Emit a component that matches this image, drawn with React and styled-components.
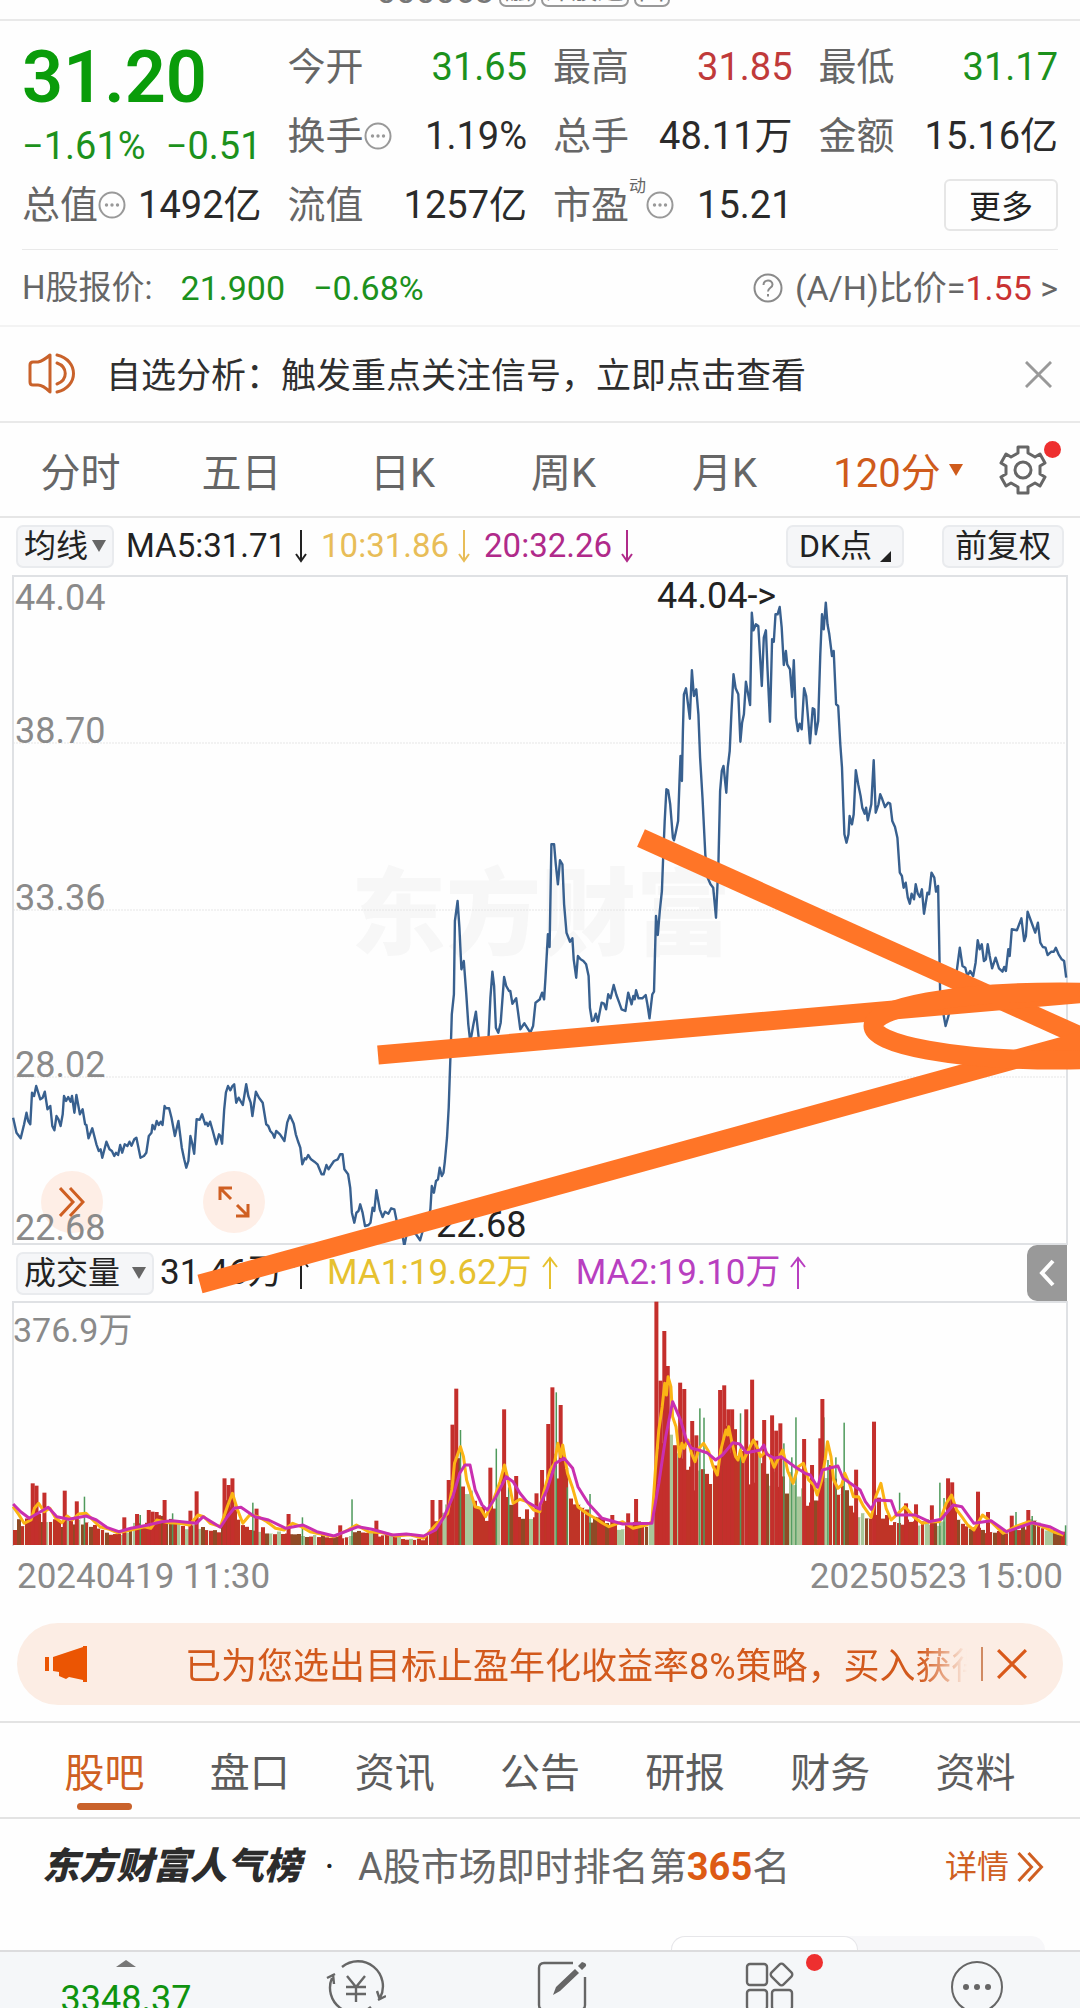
import styled, { createGlobalStyle } from "styled-components";

const GlobalStyle = createGlobalStyle`
  * {
    box-sizing: border-box;
  }
  body {
    margin: 0;
    background: #fefefe;
    font-family: Roboto, "Noto Sans CJK SC", sans-serif;
    color: #222;
  }
  button {
    margin: 0;
    padding: 0;
    border: 0;
    background: none;
    font: inherit;
    color: inherit;
    cursor: pointer;
  }
  a {
    color: inherit;
    text-decoration: none;
  }
  svg {
    display: block;
  }
`;

// the price and volume series are digitised in two halves at this resolution
const SCALE_X = 2.904;
const SCALE_Y = 3;
const HALF = 540;

const place = (points, left, top) =>
  points.map(([x, y]) => [left + x / SCALE_X, top + y / SCALE_Y]);

const toPoints = (points) =>
  points.map(([x, y]) => `${x.toFixed(1)},${y.toFixed(1)}`).join(" ");

const pairs = (text) => text.trim().split(/\s+/).map((p) => p.split(",").map(Number));

const priceFirst = pairs(`
38,800 48,845 60,862 70,820 77,785 82,810 88,820 93,725 99,735 105,705 117,745 124,740 130,722 138,775 146,765
152,825 158,838 164,795 170,805 176,825 182,790 186,735 192,750 198,738 205,752 209,735 216,785 222,732 232,790
240,775 247,820 251,822 257,862 268,832 280,880 287,900 292,895 297,920 309,872 318,895 325,900 332,915 337,905
343,912 349,882 355,905 362,880 370,885 376,872 382,884 390,865 396,860 408,920 418,915 425,905 432,855 440,845
443,822 449,835 455,810 461,822 467,812 472,822 478,765 482,772 491,772 498,800 508,855 518,810 528,890 535,925
541,950 547,930 553,855 558,875 564,908 571,805 580,806 587,790 596,820 600,815 604,825 610,812 618,840 628,880
636,850 640,855 645,878 651,775 656,725 662,705 669,718 675,705 680,700 686,755 693,740 705,762 715,700 721,735
728,755 733,795 743,722 752,740 763,755 773,820 779,825 785,840 792,848 797,860 802,840 813,850 826,870 834,815
842,793 853,818 859,850 865,870 872,890 878,940 885,922 889,925 895,912 903,925 913,932 922,940 934,970 940,970
948,942 954,955 960,945 970,930 981,925 988,910 995,910 1000,955 1011,970 1017,1010 1022,1085 1029,1115
1035,1085 1041,1080 1046,1060 1053,1085 1060,1125 1070,1122 1076,1115 1082,1070 1087,1080 1093,1018 1103,1075
1111,1098 1118,1082 1128,1088 1136,1072 1145,1075 1152,1110 1160,1115 1170,1160 1174,1185 1180,1155 1190,1135
1200,1145 1208,1150 1220,1168 1230,1130 1240,1120 1250,1075 1254,1005 1260,1025 1266,990 1272,985 1277,950
1283,975 1288,965 1292,930 1298,860 1303,770 1306,680 1310,560 1312,490 1318,430 1321,210 1329,150 1334,230
1340,355 1347,330 1354,430 1360,520 1365,565 1369,555 1374,525 1382,482 1390,560 1400,585 1412,590 1419,555
1424,440 1430,362 1435,405 1440,530 1447,545 1454,515 1460,430 1464,378 1470,405 1478,420 1482,420 1488,458
1499,442 1504,480 1511,535 1523,517 1540,545 1548,525 1555,455 1568,445`);

const priceSecond = pairs(`
0,1282 6,1265 12,1285 16,1220 23,1090 28,1128 33,820 41,820 46,880 52,940 58,868 65,880 70,1000 77,1085 87,1112
94,1102 98,1165 105,1220 110,1155 118,1165 126,1170 134,1180 141,1215 145,1310 151,1350 156,1348 162,1328
168,1352 175,1315 179,1295 186,1298 192,1315 198,1270 205,1282 214,1242 222,1272 230,1295 237,1315 248,1320
256,1265 266,1300 271,1275 275,1285 279,1258 286,1282 297,1282 307,1272 312,1300 318,1342 326,1270 331,1262
337,1035 342,1092 348,1020 354,960 357,880 362,750 367,655 372,658 378,700 386,800 389,808 394,785 401,750
405,630 408,555 412,630 415,480 418,370 424,352 435,443 441,298 447,375 454,355 460,430 465,560 472,680 480,850
487,920 495,940 503,950 511,1040 518,880 523,660 528,600 533,585 541,665 545,590 551,540 556,420 562,310 568,352
576,370 582,512 587,455 592,430 598,332 610,402 615,125 620,178 627,160 634,165 644,345 650,200 656,178 661,300
668,452 674,205 679,212 684,130 690,130 696,108 702,170 708,282 714,240 718,280 726,295 732,378 737,268 743,440
749,480 754,458 760,475 767,352 773,375 779,450 784,517 792,412 797,415 801,490 808,450 814,250 819,130 824,175
830,95 835,160 840,190 848,255 853,240 860,400 866,405 872,520 877,590 881,710 884,790 890,815 896,790 899,735
906,760 911,730 917,598 924,640 931,675 936,710 943,728 947,710 952,748 962,700 969,568 975,725 983,700 988,670
994,685 1002,708 1011,695 1017,698 1023,750 1031,768 1038,800 1045,905 1051,915 1056,950 1062,935 1068,980
1074,998 1079,968 1086,985 1091,940 1097,968 1103,978 1109,955 1115,1028 1125,965 1130,970 1137,905 1145,920
1150,962 1156,945 1159,1100 1162,1260 1170,1320 1178,1365 1190,1320 1205,1240 1212,1185 1219,1130 1227,1185
1235,1190 1241,1215 1249,1200 1258,1215 1265,1175 1271,1108 1277,1135 1283,1120 1289,1170 1295,1165 1300,1120
1306,1155 1313,1192 1323,1160 1333,1192 1343,1202 1348,1188 1353,1200 1360,1135 1364,1155 1370,1075 1385,1078
1398,1042 1406,1110 1411,1095 1416,1022 1426,1050 1438,1085 1446,1055 1453,1115 1460,1128 1468,1130 1474,1152
1485,1142 1492,1142 1498,1130 1506,1150 1515,1165 1522,1170 1528,1220`);

const priceLine = [...place(priceFirst, 0, 277), ...place(priceSecond, HALF, -3)];

const volumeBase = [
  ...place(pairs(`
38,885 100,850 150,880 250,880 300,905 340,910 430,870 480,870 540,890 600,890 640,900 655,800 680,860 720,890
800,905 900,915 1000,920 1030,900 1100,915 1220,930 1260,880 1300,820 1320,680 1345,730 1370,800 1410,870
1440,800 1470,760 1500,850 1568,860`), 0, -71),
  ...place(pairs(`
0,820 35,700 60,700 100,830 150,865 200,885 300,885 325,870 335,700 350,560 370,500 380,600 400,700 430,720
490,760 520,650 550,640 600,700 700,740 790,820 830,720 880,800 950,880 975,820 1010,880 1100,870 1160,890
1190,820 1230,890 1350,910 1420,880 1528,910`), HALF, -71),
];

const redSpikes = [
  ...place(pairs(`
95,760 106,767 129,788 188,782 223,814 361,862 398,852 432,840 443,845 455,846 478,810 553,842 571,784 652,745
664,765 675,745 745,836 838,852 988,886 1093,872 1256,810 1279,810 1303,750 1314,584 1325,476 1424,713 1464,538
1499,738 1558,790`), 0, -71),
  ...place(pairs(`
6,720 24,582 36,472 60,525 210,855 256,850 279,807 338,215 350,452 361,303 371,408 407,458 419,477 442,573
454,616 523,480 535,466 547,538 558,538 599,538 616,449 628,632 651,570 674,556 686,602 698,580 767,627 790,705
814,625 820,507 918,719 970,575 1063,820 1092,823 1138,826 1185,745 1197,757 1272,785 1301,846 1370,857
1418,840`), HALF, -71),
];

const greenSpikes = [
  ...place(pairs(`
246,800 408,855 502,850 735,818 879,862 1023,808 1338,600 1442,656 1478,772`), 0, -71),
  ...place(pairs(`
48,487 80,772 146,792 465,535 477,563 583,550 709,640 744,562 732,682 825,562 860,682 884,578 837,690 1045,788
1162,758 1174,804 1383,846 1430,858 1527,886`), HALF, -71),
];

const shortAverage = [
  ...place(pairs(`
38,830 52,850 70,880 90,870 100,835 112,820 128,845 145,835 162,865 180,878 195,858 210,870 228,852 250,850
268,868 290,890 318,898 340,908 380,900 420,890 438,895 455,870 490,878 520,880 550,885 575,855 592,860 610,880
640,890 660,830 675,790 690,840 705,880 725,855 750,860 775,875 800,895 825,900 850,880 875,890 900,905 970,920
1010,900 1035,885 1070,905 1110,908 1150,918 1190,914 1230,925 1252,900 1270,880 1300,850 1312,780 1320,700
1337,650 1346,680 1355,750 1380,830 1395,835 1410,860 1425,830 1440,790 1452,755 1465,705 1478,760 1490,820
1510,808 1530,815 1550,840 1568,845`), 0, -71),
  ...place(pairs(`
0,830 18,760 30,720 42,700 52,640 60,680 66,645 80,730 95,775 110,830 135,850 160,865 182,880 200,890 240,875
270,895 310,885 325,875 335,720 345,600 355,530 362,460 367,495 372,440 380,470 385,560 395,590 405,680 412,640
418,655 430,630 440,670 450,695 462,655 475,640 490,665 503,710 515,735 525,660 535,620 540,600 545,615 548,590
558,640 568,680 575,690 582,660 590,695 603,665 620,630 632,655 640,680 655,665 668,680 680,712 690,690 705,660
720,725 735,760 750,710 765,700 780,750 795,765 805,795 818,750 828,690 835,635 845,680 853,750 865,775 876,765
885,730 900,765 910,800 925,800 940,830 962,862 975,800 990,760 1005,835 1020,870 1040,850 1060,830 1085,860
1110,880 1135,875 1160,875 1180,820 1195,795 1210,840 1225,860 1242,885 1260,900 1285,855 1315,880 1345,910
1380,890 1420,875 1460,890 1490,905 1520,915`), HALF, -71),
];

const longAverage = [
  ...place(pairs(`
38,822 60,845 85,865 110,850 140,832 165,860 200,868 250,858 280,870 310,892 345,905 380,895 430,885 470,875
500,872 570,880 590,860 640,892 660,860 680,835 700,832 740,860 780,870 830,895 880,885 920,905 970,918 1040,890
1080,898 1140,915 1180,912 1230,918 1265,900 1290,860 1315,800 1335,730 1350,705 1365,705 1380,780 1400,825
1415,840 1440,800 1470,740 1490,755 1510,790 1530,815 1568,838`), 0, -71),
  ...place(pairs(`
0,825 20,780 45,700 70,685 95,715 110,770 140,820 180,865 240,882 325,880 345,760 365,620 385,515 400,550
408,570 425,630 440,655 460,660 485,668 510,690 530,675 560,638 580,642 600,668 640,660 650,645 658,672 680,685
700,680 740,710 770,730 785,735 806,772 820,720 865,708 880,745 930,780 945,815 962,838 975,810 1020,812
1035,855 1090,855 1130,875 1165,868 1200,825 1225,830 1260,880 1310,872 1355,905 1430,878 1480,890 1522,912`), HALF, -71),
];

const FLOOR = 244;

const baseAt = (x) => {
  const next = volumeBase.findIndex(([px]) => px >= x);
  if (next < 1) return volumeBase[0][1];
  const [x0, y0] = volumeBase[next - 1];
  const [x1, y1] = volumeBase[next];
  return y0 + ((y1 - y0) * (x - x0)) / (x1 - x0 || 1);
};

const noise = (n) => {
  const v = Math.sin(n * 12.9898) * 43758.5453;
  return v - Math.floor(v);
};

const volumeBars = Array.from({ length: 263 }, (_, i) => {
  const x = 13 + i * 4;
  const height = (FLOOR - baseAt(x)) * (0.75 + noise(i) * 0.45);
  const tone = noise(i + 400);
  const fill = tone < 0.62 ? "#bf3427" : tone < 0.82 ? "#8f4a26" : "#a9c79a";
  return { x, height, fill, slit: noise(i + 900) > 0.72 };
});

const App = () => {
  return (
    <Page>
      <GlobalStyle />
      <TitleBar>
        <Code>000063</Code>
        <Chip>融</Chip>
        <Chip>深股通</Chip>
        <Chip>固</Chip>
      </TitleBar>

      <Quote>
        <PriceBlock>
          <Price>31.20</Price>
          <Change>
            <span>−1.61%</span>
            <span>−0.51</span>
          </Change>
        </PriceBlock>
        <Stat label="今开" value="31.65" tone="green" />
        <Stat label="最高" value="31.85" tone="red" />
        <Stat label="最低" value="31.17" tone="green" />
        <Stat label="换手" value="1.19%" info />
        <Stat label="总手" value="48.11万" />
        <Stat label="金额" value="15.16亿" />
        <Stat label="总值" value="1492亿" info />
        <Stat label="流值" value="1257亿" />
        <Stat label="市盈" sup="动" value="15.21" info />
        <MoreButton>更多</MoreButton>
      </Quote>

      <HShare>
        <Muted>H股报价:</Muted>
        <Green>21.900</Green>
        <Green>−0.68%</Green>
        <Ratio href="#ratio">
          <QuestionIcon />
          <span>
            (A/H)比价=<Red>1.55</Red> &gt;
          </span>
        </Ratio>
      </HShare>

      <Signal>
        <SpeakerIcon />
        <SignalText>自选分析：触发重点关注信号，立即点击查看</SignalText>
        <IconButton aria-label="关闭">
          <CrossIcon size={27} color="#999" />
        </IconButton>
      </Signal>

      <Periods>
        {["分时", "五日", "日K", "周K", "月K"].map((name) => (
          <Period key={name}>{name}</Period>
        ))}
        <Period $active>
          120分
          <Caret $size={7} $color="#cf5b1b" />
        </Period>
        <SettingsButton aria-label="设置">
          <GearIcon />
          <Dot />
        </SettingsButton>
      </Periods>

      <Averages>
        <Tag>
          均线
          <Caret $size={7} $color="#666" />
        </Tag>
        <Average $color="#222">
          MA5:31.71
          <Arrow down />
        </Average>
        <Average $color="#e8bd58">
          10:31.86
          <Arrow down />
        </Average>
        <Average $color="#b02a8a">
          20:32.26
          <Arrow down />
        </Average>
        <Spacer />
        <Tag $wide>
          DK点
          <Corner />
        </Tag>
        <Tag $wide>前复权</Tag>
      </Averages>

      <ChartArea>
        <PriceChart />
        <ChartButtons>
          <RoundButton aria-label="展开">
            <DoubleChevron width={26} height={30} />
          </RoundButton>
          <RoundButton aria-label="全屏">
            <ExpandIcon />
          </RoundButton>
        </ChartButtons>
        <VolumeBar>
          <Tag>
            成交量
            <Gap />
            <Caret $size={7} $color="#666" />
          </Tag>
          <VolumeValue $color="#222">
            31.46万
            <Arrow />
          </VolumeValue>
          <VolumeValue $color="#e6c12f">
            MA1:19.62万
            <Arrow />
          </VolumeValue>
          <VolumeValue $color="#b83fc0">
            MA2:19.10万
            <Arrow />
          </VolumeValue>
          <Fold aria-label="收起">
            <svg width="16" height="28" viewBox="0 0 16 28" fill="none" stroke="#fff" strokeWidth="4">
              <path d="M14 2 L3 14 L14 26" />
            </svg>
          </Fold>
        </VolumeBar>
        <VolumeChart />
        <Drawing />
      </ChartArea>

      <Dates>
        <span>20240419 11:30</span>
        <span>20250523 15:00</span>
      </Dates>

      <Banner>
        <HornIcon />
        <BannerText>已为您选出目标止盈年化收益率8%策略，买入获得</BannerText>
        <BannerRule />
        <IconButton aria-label="关闭">
          <CrossIcon size={30} color="#d9591a" />
        </IconButton>
      </Banner>

      <Tabs>
        {["股吧", "盘口", "资讯", "公告", "研报", "财务", "资料"].map((name, i) => (
          <Tab key={name} $active={i === 0}>
            {name}
          </Tab>
        ))}
      </Tabs>

      <Rank>
        <RankTitle>东方财富人气榜</RankTitle>
        <RankDot>·</RankDot>
        <RankText>
          A股市场即时排名第<strong>365</strong>名
        </RankText>
        <Detail href="#detail">
          详情
          <DoubleChevron width={27} height={30} />
        </Detail>
      </Rank>

      <Switcher>
        <SwitcherOn />
      </Switcher>

      <BottomBar>
        <IndexButton>
          <Up />
          3348.37
        </IndexButton>
        <BarButton aria-label="交易">
          <TradeIcon />
        </BarButton>
        <BarButton aria-label="发帖">
          <EditIcon />
        </BarButton>
        <BarButton aria-label="应用">
          <AppsIcon />
        </BarButton>
        <BarButton aria-label="更多">
          <svg width="54" height="54" viewBox="0 0 54 54" fill="none" stroke="#666" strokeWidth="2">
            <circle cx="27" cy="27" r="25" />
            <g fill="#666" stroke="none">
              <circle cx="16" cy="27" r="3" />
              <circle cx="27" cy="27" r="3" />
              <circle cx="38" cy="27" r="3" />
            </g>
          </svg>
        </BarButton>
      </BottomBar>
    </Page>
  );
};

export default App;

const Stat = ({ label, sup, value, tone, info }) => (
  <StatBox>
    <Muted>{label}</Muted>
    {sup && <Sup>{sup}</Sup>}
    {info && <InfoIcon />}
    <StatValue $tone={tone}>{value}</StatValue>
  </StatBox>
);

const PriceChart = () => (
  <ChartSvg viewBox="0 0 1080 671">
    <text x="351" y="374" fontSize="95" fontWeight="900" fill="#f7f7f7">
      东方财富
    </text>
    <g stroke="#e6e6e6" strokeWidth="1" strokeDasharray="2 1">
      <path d="M13 169H1067M13 336H1067M13 503H1067" />
    </g>
    <rect x="13" y="2" width="1054" height="668" fill="none" stroke="#dfe1e4" strokeWidth="2" />
    <circle cx="72" cy="628" r="31" fill="#feeee6" />
    <circle cx="234" cy="628" r="31" fill="#feeee6" />
    <polyline
      points={toPoints(priceLine)}
      fill="none"
      stroke="#38608f"
      strokeWidth="2.4"
      strokeLinejoin="round"
    />
    <g fontSize="36" fill="#8a8a8a">
      <text x="15" y="36">44.04</text>
      <text x="15" y="169">38.70</text>
      <text x="15" y="336">33.36</text>
      <text x="15" y="503">28.02</text>
      <text x="15" y="666">22.68</text>
    </g>
    <g fontSize="36" fill="#222">
      <text x="657" y="34">44.04-&gt;</text>
      <text x="436" y="663">22.68</text>
    </g>
  </ChartSvg>
);

const VolumeChart = () => (
  <ChartSvg viewBox="0 0 1080 246">
    <path d="M13 245V1H1067V245" fill="none" stroke="#dfe1e4" strokeWidth="2" />
    {volumeBars.map((bar) => (
      <g key={bar.x}>
        <rect x={bar.x} y={FLOOR - bar.height} width="4" height={bar.height} fill={bar.fill} />
        {bar.slit && (
          <rect x={bar.x + 3} y={FLOOR - bar.height} width="1" height={bar.height} fill="#e9efe0" />
        )}
      </g>
    ))}
    {greenSpikes.map(([x, y]) => (
      <rect key={x} x={x - 1} y={y} width="1.5" height={FLOOR - y} fill="#4f9a5c" />
    ))}
    {redSpikes.map(([x, y]) => (
      <rect key={x} x={x - 2} y={y} width="4" height={FLOOR - y} fill="#c42f2c" />
    ))}
    <g fill="none" strokeWidth="3" strokeLinejoin="round">
      <polyline points={toPoints(shortAverage)} stroke="#fbb414" />
      <polyline points={toPoints(longAverage)} stroke="#c92fb0" />
    </g>
    <text x="13" y="41" fontSize="34" fill="#8a8a8a">
      376.9万
    </text>
  </ChartSvg>
);

// user's own trend lines, laid over both charts
const Drawing = () => (
  <DrawingSvg viewBox="0 0 1080 971" fill="none" stroke="#ff7527" strokeWidth="19">
    <path d="M641 264 L1100 471" />
    <path d="M378 481 L1100 418" />
    <path d="M200 710 L1100 462" />
    <ellipse cx="1060" cy="452" rx="187" ry="34" />
  </DrawingSvg>
);

const InfoIcon = () => (
  <svg width="28" height="28" viewBox="0 0 28 28" fill="none" stroke="#999" strokeWidth="2">
    <circle cx="14" cy="14" r="12.5" />
    <g fill="#999" stroke="none">
      <circle cx="8.5" cy="14" r="1.7" />
      <circle cx="14" cy="14" r="1.7" />
      <circle cx="19.5" cy="14" r="1.7" />
    </g>
  </svg>
);

const QuestionIcon = () => (
  <svg width="30" height="30" viewBox="0 0 30 30" fill="none" stroke="#8a8a8a" strokeWidth="2">
    <circle cx="15" cy="15" r="13.5" />
    <path d="M10.500 12 C10.500 6 19.500 6 19.500 11.500 C19.500 15 15 14.500 15 18.500 M15 21 V23.500" />
  </svg>
);

const SpeakerIcon = () => (
  <svg width="48" height="42" viewBox="0 0 48 42" fill="none" stroke="#c9622b" strokeWidth="3">
    <path
      d="M2 12 C2 10 3 9 5 9 H10 Q15 8 22 2 V39 Q15 32 10 32 H5 C3 32 2 31 2 29 Z"
      strokeLinejoin="round"
    />
    <path d="M29 2 C51 7 51 34 29 39 M29 10 C40 14 40 27 29 31" strokeLinecap="round" />
  </svg>
);

const CrossIcon = ({ size, color }) => (
  <svg width={size} height={size} viewBox="0 0 28 28" fill="none" stroke={color} strokeWidth="3">
    <path d="M1 1 L27 27 M27 1 L1 27" />
  </svg>
);

const GearIcon = () => (
  <svg width="48" height="50" viewBox="0 0 48 50" fill="none" stroke="#666" strokeWidth="3">
    <path
      d="M19 2 H29 V8 L36 12 L41 9 L46 18 L41 21 V29 L46 32 L41 41 L36 38 L29 42 V48 H19 V42 L12 38 L7 41 L2 32 L7 29 V21 L2 18 L7 9 L12 12 L19 8 Z"
      strokeLinejoin="round"
    />
    <circle cx="24" cy="25" r="8" />
  </svg>
);

const Arrow = ({ down }) => (
  <svg width="16" height="34" viewBox="0 0 16 34" fill="none" stroke="currentColor" strokeWidth="2">
    <path d={down ? "M8 1 V32 M3 25 L8 32 L13 25" : "M8 33 V2 M1 11 L8 2 L15 11"} />
  </svg>
);

const DoubleChevron = ({ width, height }) => (
  <svg width={width} height={height} viewBox="0 0 26 30" fill="none" stroke="#cf5f22" strokeWidth="3">
    <path d="M1 1 L14 15 L1 29 M11 1 L24 15 L11 29" />
  </svg>
);

const ExpandIcon = () => (
  <svg width="32" height="32" viewBox="0 0 32 32" fill="none" stroke="#cf5f22" strokeWidth="3">
    <path d="M2 14 V2 H14 M3 3 L13 13 M30 18 V30 H18 M29 29 L19 19" />
  </svg>
);

const HornIcon = () => (
  <svg width="44" height="38" viewBox="0 0 44 38" fill="#eb5503">
    <path d="M0 12 H4 V26 H0 Z" />
    <path d="M8 12 L38 2 V1 H42 V37 H38 V35 L24 32 L21 34 L14 31 V27 L8 26 Z" />
  </svg>
);

const TradeIcon = () => (
  <svg width="60" height="54" viewBox="0 0 60 54" fill="none" stroke="#666" strokeWidth="2.4">
    <path d="M16 7 A25 25 0 0 1 54 38 M54 40 L51 31 M52 40 L60 36" />
    <path d="M45 47 A25 25 0 0 1 6 18 M1 18 L9 14 M7 14 L8 24" />
    <path d="M21 16 L30 27 L39 16 M20 27 H40 M20 34 H40 M30 27 V42" />
  </svg>
);

const EditIcon = () => (
  <svg width="52" height="54" viewBox="0 0 52 54" fill="none" stroke="#666" strokeWidth="2.4">
    <path d="M36 3 H7 Q2 3 2 8 V45 Q2 50 7 50 H43 Q48 50 48 45 V17" />
    <path d="M16 35 L19 27 L38 9 L42 13 L23 31 Z M41 6 L45 2 Q50 3 49 6 L45 10 Z" fill="#666" stroke="none" />
  </svg>
);

const AppsIcon = () => (
  <AppsWrap>
    <svg width="50" height="54" viewBox="0 0 50 54" fill="none" stroke="#666" strokeWidth="2.4">
      <rect x="2" y="4" width="20" height="21" rx="3" />
      <rect x="2" y="30" width="20" height="20" rx="3" />
      <rect x="27" y="30" width="20" height="20" rx="3" />
      <rect x="28" y="6" width="17" height="17" rx="3" transform="rotate(45 36.500 14.500)" />
    </svg>
    <Dot />
  </AppsWrap>
);

const Page = styled.div`
  min-width: 1000px;
  overflow: hidden;
`;

const TitleBar = styled.header`
  display: flex;
  justify-content: center;
  align-items: flex-end;
  gap: 5px;
  height: 21px;
  padding-bottom: 12px;
  padding-right: 34px;
  border-bottom: 2px solid #e9e9e9;
  color: #777;
`;

const Code = styled.span`
  font-size: 35px;
  line-height: 30px;
`;

const Chip = styled.span`
  padding: 0 3px;
  border: 2px solid #999;
  border-radius: 7px;
  font-size: 26px;
  line-height: 30px;
`;

const Quote = styled.section`
  display: grid;
  grid-template-columns: repeat(4, 1fr);
  grid-template-rows: repeat(3, 69px);
  column-gap: 26px;
  margin: 0 22px;
  padding: 11px 0 10px;
  border-bottom: 1px solid #e9e9e9;
`;

const PriceBlock = styled.div`
  grid-row: span 2;
  display: flex;
  flex-direction: column;
  justify-content: center;
  gap: 8px;
  padding-top: 6px;
  color: #0a9c0a;
`;

const Price = styled.div`
  font-size: 72px;
  line-height: 76px;
  font-weight: 600;
`;

const Change = styled.div`
  display: flex;
  justify-content: space-between;
  color: #1c911c;
  font-size: 38px;
  line-height: 44px;
`;

const StatBox = styled.div`
  display: flex;
  align-items: center;
  font-size: 38px;
  line-height: 44px;
  white-space: nowrap;
`;

const StatValue = styled.span`
  margin-left: auto;
  color: ${({ $tone }) => ($tone === "green" ? "#1c911c" : $tone === "red" ? "#c03a3a" : "#2a2a2a")};
`;

const Sup = styled.sup`
  align-self: flex-start;
  padding-top: 6px;
  color: #666;
  font-size: 17px;
  line-height: 20px;
`;

const MoreButton = styled.button`
  justify-self: end;
  align-self: center;
  width: 114px;
  height: 52px;
  padding-bottom: 4px;
  border: 2px solid #e6e6e6;
  border-radius: 6px;
  font-size: 32px;
`;

const Muted = styled.span`
  color: #666;
`;

const Green = styled.span`
  color: #1c911c;
  font-size: 34px;
`;

const Red = styled.span`
  color: #c93232;
`;

const HShare = styled.section`
  display: flex;
  align-items: center;
  gap: 28px;
  height: 77px;
  padding: 0 22px;
  border-bottom: 2px solid #f3f3f3;
  font-size: 33px;
  line-height: 40px;
`;

const Ratio = styled.a`
  display: flex;
  align-items: center;
  gap: 12px;
  margin-left: auto;
  color: #666;
  font-size: 34px;
`;

const Signal = styled.section`
  display: flex;
  align-items: center;
  gap: 30px;
  height: 96px;
  padding: 0 28px;
  border-bottom: 2px solid #e9e9e9;
`;

const SignalText = styled.p`
  flex: 1;
  margin: 0;
  padding-top: 5px;
  color: #2f2f2f;
  font-size: 35px;
  line-height: 44px;
`;

const IconButton = styled.button`
  display: flex;
`;

const Periods = styled.nav`
  display: flex;
  height: 95px;
  padding-right: 25px;
  border-bottom: 2px solid #e6e6e6;
`;

const Period = styled.button`
  flex: ${({ $active }) => ($active ? 186 : 161)} 0 0;
  display: flex;
  align-items: center;
  justify-content: center;
  gap: 8px;
  color: ${({ $active }) => ($active ? "#cf5b1b" : "#666")};
  font-size: 40px;
`;

const SettingsButton = styled.button`
  position: relative;
  flex: 64 0 0;
  display: flex;
  align-items: center;
  justify-content: center;
`;

const Dot = styled.i`
  position: absolute;
  top: 18px;
  right: -6px;
  width: 17px;
  height: 17px;
  border-radius: 50%;
  background: #ee2f2f;
`;

const Caret = styled.i`
  border: ${({ $size }) => $size}px solid transparent;
  border-top: 12px solid ${({ $color }) => $color};
  border-bottom: 0;
`;

const Averages = styled.section`
  display: flex;
  align-items: center;
  gap: 12px;
  height: 56px;
  padding: 0 16px;
`;

const Tag = styled.button`
  display: flex;
  align-items: center;
  gap: 4px;
  height: 43px;
  padding: 0 ${({ $wide }) => ($wide ? 11 : 6)}px;
  margin-left: ${({ $wide }) => ($wide ? 26 : 0)}px;
  border: 2px solid #e9ebee;
  border-radius: 7px;
  background: #f5f6f8;
  color: #222;
  font-size: 32px;
  line-height: 38px;
  white-space: nowrap;
`;

const Gap = styled.i`
  width: 4px;
`;

const Corner = styled.i`
  align-self: flex-end;
  margin-left: 4px;
  margin-bottom: 4px;
  border-left: 11px solid transparent;
  border-bottom: 11px solid #222;
`;

const Average = styled.span`
  display: flex;
  align-items: center;
  gap: 7px;
  color: ${({ $color }) => $color};
  font-size: 33px;
  line-height: 38px;
`;

const Spacer = styled.span`
  flex: 1;
`;

const ChartArea = styled.section`
  position: relative;
`;

const ChartSvg = styled.svg`
  width: 100%;
  height: auto;
`;

const DrawingSvg = styled.svg`
  position: absolute;
  top: 0;
  left: 0;
  width: 100%;
  pointer-events: none;
`;

const ChartButtons = styled.div`
  position: absolute;
  top: 597px;
  left: 41px;
  display: flex;
  gap: 100px;
`;

const RoundButton = styled.button`
  display: flex;
  align-items: center;
  justify-content: center;
  width: 62px;
  height: 62px;
  border-radius: 50%;
`;

const VolumeBar = styled.div`
  display: flex;
  align-items: center;
  gap: 6px;
  height: 56px;
  padding: 0 13px 0 16px;
`;

const VolumeValue = styled.span`
  display: flex;
  align-items: center;
  gap: 10px;
  margin-right: 12px;
  color: ${({ $color }) => $color};
  font-size: 35px;
  line-height: 40px;
  white-space: nowrap;
`;

const Fold = styled.button`
  display: flex;
  align-items: center;
  justify-content: center;
  width: 40px;
  height: 56px;
  margin-left: auto;
  border-radius: 10px 0 0 10px;
  background: #999;
`;

const Dates = styled.div`
  display: flex;
  justify-content: space-between;
  padding: 8px 17px 0;
  color: #8a8a8a;
  font-size: 35px;
  line-height: 44px;
`;

const Banner = styled.aside`
  display: flex;
  align-items: center;
  height: 82px;
  margin: 24px 17px 16px;
  padding: 0 36px 0 28px;
  border-radius: 41px;
  background: #fcede4;
`;

const BannerText = styled.p`
  flex: 1;
  margin: 0 14px 0 96px;
  padding-top: 5px;
  overflow: hidden;
  color: #d2591c;
  font-size: 36px;
  line-height: 44px;
  white-space: nowrap;
  mask-image: linear-gradient(to right, #000 94%, transparent);
`;

const BannerRule = styled.i`
  width: 2px;
  height: 34px;
  margin-right: 14px;
  background: #d08a62;
`;

const Tabs = styled.nav`
  display: flex;
  height: 98px;
  padding: 0 32px;
  border-top: 2px solid #e3e3e3;
  border-bottom: 2px solid #e3e3e3;
`;

const Tab = styled.button`
  position: relative;
  flex: 1;
  color: ${({ $active }) => ($active ? "#cf5f22" : "#5c5c5c")};
  font-size: 40px;

  &::after {
    content: "";
    display: ${({ $active }) => ($active ? "block" : "none")};
    position: absolute;
    left: 50%;
    bottom: 7px;
    width: 55px;
    height: 7px;
    margin-left: -28px;
    border-radius: 4px;
    background: #c9622b;
  }
`;

const Rank = styled.section`
  display: flex;
  align-items: center;
  height: 96px;
  padding: 0 36px 0 42px;
  font-size: 38px;
  line-height: 46px;
  white-space: nowrap;
`;

const RankTitle = styled.h2`
  margin: 0;
  color: #2c2c2c;
  font-size: 37px;
  font-weight: 900;
  font-style: italic;
`;

const RankDot = styled.span`
  width: 57px;
  text-align: center;
`;

const RankText = styled.span`
  color: #666;

  strong {
    color: #dd5a14;
  }
`;

const Detail = styled.a`
  display: flex;
  align-items: center;
  gap: 8px;
  margin-left: auto;
  color: #cf5f22;
  font-size: 32px;
`;

const Switcher = styled.div`
  width: 374px;
  height: 14px;
  margin: 21px 35px 0 auto;
  border-radius: 14px 14px 0 0;
  background: #f7f7f9;
`;

const SwitcherOn = styled.div`
  width: 50%;
  height: 14px;
  border: 1px solid #e6e6e9;
  border-bottom: 0;
  border-radius: 14px 14px 0 0;
  background: #fff;
`;

const BottomBar = styled.footer`
  display: flex;
  align-items: flex-start;
  height: 60px;
  overflow: hidden;
  border-top: 2px solid #dcdcde;
  background: #f5f7f9;
`;

const BarButton = styled.button`
  flex: 207 0 0;
  display: flex;
  justify-content: center;
  padding-top: 8px;
`;

const IndexButton = styled(BarButton)`
  flex-grow: 252;
  flex-direction: column;
  align-items: center;
  gap: 11px;
  color: #0f930f;
  font-size: 36px;
  line-height: 42px;
`;

const Up = styled.i`
  border: 10px solid transparent;
  border-top: 0;
  border-bottom: 7px solid #777;
`;

const AppsWrap = styled.span`
  position: relative;

  ${Dot} {
    top: -6px;
    right: -28px;
  }
`;
